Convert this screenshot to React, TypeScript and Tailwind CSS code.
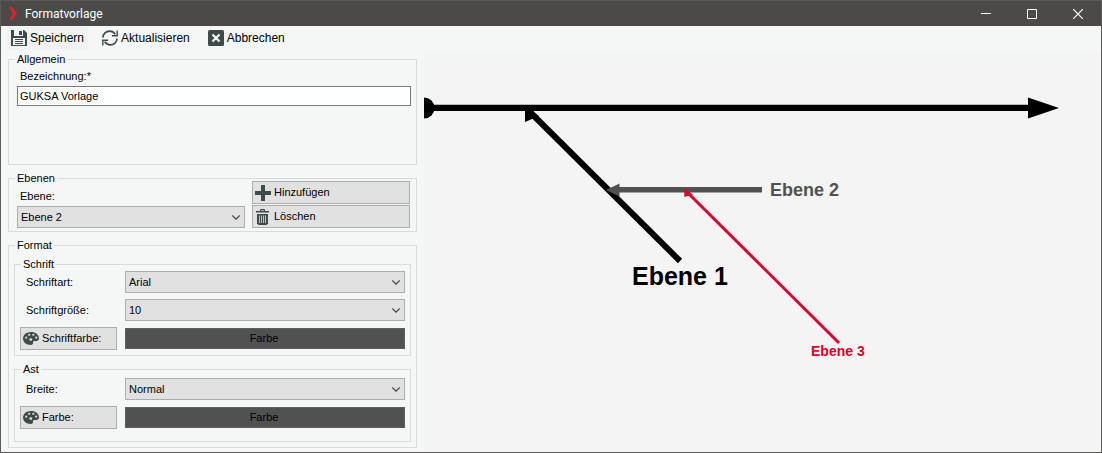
import React, { useState } from 'react';

function SaveIcon() {
  return (
    <svg viewBox="0 0 16 16" className="w-4 h-4 shrink-0" fill="#3f4b4b">
      <path d="M0 0h13l3 3v13H0z" />
      <path d="M3 0h9v6H3z" fill="#f4f5f5" />
      <path d="M8 1h3v4H8z" />
      <path d="M2 8h12v7H2z" fill="#f4f5f5" />
      <path d="M4 9h8v1H4zM4 11h8v1H4zM4 13h8v1H4z" />
    </svg>
  );
}

function RefreshIcon() {
  return (
    <svg viewBox="0 0 16 16" className="w-4 h-4 shrink-0" fill="none" stroke="#3f4b4b" strokeWidth="1.7">
      <path d="M1 7.5C1 3.8 4.2 1.2 7.6 1.2c2.4 0 4.3 1 5.7 3" />
      <path d="M15 8.5c0 3.7-3.2 6.3-6.6 6.3-2.4 0-4.3-1-5.7-3" />
      <path d="M15.2 0.5v5.3H9.9" strokeWidth="1.4" />
      <path d="M0.8 15.5v-5.3h5.3" strokeWidth="1.4" />
    </svg>
  );
}

function CancelIcon() {
  return (
    <svg viewBox="0 0 16 16" className="w-4 h-4 shrink-0">
      <rect width="16" height="16" rx="1.5" fill="#3f4b4b" />
      <path d="M4.5 4.5l7 7M11.5 4.5l-7 7" stroke="#f4f5f5" strokeWidth="2.2" />
    </svg>
  );
}

function PlusIcon() {
  return (
    <svg viewBox="0 0 16 16" className="w-4 h-4 shrink-0" fill="#3f4b4b">
      <path d="M6 0h4v6h6v4h-6v6H6v-6H0V6h6z" />
    </svg>
  );
}

function TrashIcon() {
  return (
    <svg viewBox="0 0 16 16" className="w-4 h-4 shrink-0" fill="#3f4b4b">
      <path d="M1 2h4V0.8L5.8 0h3.4l0.8 0.8V2h4v1.6H1zM6.2 1.2V2h2.6v-0.8z" fillRule="evenodd" />
      <path d="M2 5h11v9.5l-1.5 1.5h-8L2 14.5z" />
      <path d="M4.5 6.5v7.5M6.5 6.5v7.5M8.5 6.5v7.5M10.5 6.5v7.5" stroke="#e1e1e1" strokeWidth="0.8" />
    </svg>
  );
}

function PaletteIcon() {
  return (
    <svg viewBox="0 0 16 13" className="w-4 h-[13px] shrink-0" fill="#3f4b4b">
      <path d="M8 0C3.5 0 0 2.8 0 6.5S3.5 13 7.5 13c2 0 2.7-1 2.5-2.2-.2-1.3.3-2 1.600-1.9 1.6.1 4.4.3 4.4-2.7C16 2.6 12.4 0 8 0z" />
      <g fill="#e1e1e1">
        <circle cx="3.2" cy="5.7" r="1.1" />
        <circle cx="6.2" cy="2.8" r="1.1" />
        <circle cx="10.3" cy="2.8" r="1.1" />
        <circle cx="13.2" cy="5.6" r="1.1" />
        <circle cx="7.8" cy="7.6" r="1.4" />
      </g>
    </svg>
  );
}

function ToolButton({ icon, label, active }: { icon: React.ReactNode; label: string; active?: boolean }) {
  return (
    <button className={`flex items-center gap-[3px] px-1 h-[22px] text-[12px] leading-4 ${active ? 'bg-[#f1f2f2]' : ''}`}>
      {icon}
      <span>{label}</span>
    </button>
  );
}

function PanelButton({ icon, label }: { icon: React.ReactNode; label: string }) {
  return (
    <button className="flex items-center gap-[3px] h-[23px] px-[2px] border border-[#adadad] bg-[#e1e1e1]">
      {icon}
      <span>{label}</span>
    </button>
  );
}

type SelectProps = {
  id: string;
  value: string;
  options: string[];
  onChange: (v: string) => void;
};

function Select({ id, value, options, onChange }: SelectProps) {
  return (
    <div className="relative">
      <select
        id={id}
        value={value}
        onChange={(e) => onChange(e.target.value)}
        className="block w-full h-[22px] pl-[3px] pr-5 appearance-none border border-[#adadad] bg-[#e1e1e1] outline-none"
      >
        {options.map((o) => (
          <option key={o}>{o}</option>
        ))}
      </select>
      <svg viewBox="0 0 8 5" className="absolute right-[5px] top-[9px] w-2 h-[5px] pointer-events-none" fill="none" stroke="#444" strokeWidth="1.2">
        <path d="M0.3 0.5L4 4.2L7.7 0.5" />
      </svg>
    </div>
  );
}

function Group({ title, className = '', children }: { title: string; className?: string; children: React.ReactNode }) {
  return (
    <fieldset className="min-w-0 border border-[#d9dbdb]">
      <legend className="ml-[6px] px-[2px]">{title}</legend>
      <div className={className}>{children}</div>
    </fieldset>
  );
}

function ColorBar() {
  return (
    <button className="h-[21px] pr-[2px] border border-[#5e5e5e] bg-[#515151] text-black text-center">Farbe</button>
  );
}

// fishbone preview of the three levels
function Preview() {
  return (
    <svg viewBox="0 0 670 320" className="w-[670px] h-[320px] shrink-0" role="img" aria-label="Vorschau">
      <path d="M0 44.5A10.5 10.5 0 0 1 0 65.5z" />
      <path d="M0 54.8H606" stroke="#000" strokeWidth="6.2" />
      <path d="M604 44.5L635 55L604 65.5z" />

      <path d="M106 59L256 208" stroke="#000" strokeWidth="6" />
      <path d="M101 54V69L115 63z" />

      <path d="M193 136.8H338" stroke="#515151" strokeWidth="5.5" />
      <path d="M182 137L195.5 130.5V143.5z" fill="#515151" />

      <path d="M263 139L415 290" stroke="#e0002d" strokeWidth="3" />
      <path d="M260.3 135.5V144L269 141.5z" fill="#e0002d" />

      <g className="font-bold">
        <text x="208" y="232" fontSize="25">Ebene 1</text>
        <text x="346" y="143" fontSize="18" fill="#515151">Ebene 2</text>
        <text x="387" y="303" fontSize="14" fill="#e0002d">Ebene 3</text>
      </g>
    </svg>
  );
}

export default function App() {
  const [name, setName] = useState('GUKSA Vorlage');
  const [level, setLevel] = useState('Ebene 2');
  const [font, setFont] = useState('Arial');
  const [size, setSize] = useState('10');
  const [width, setWidth] = useState('Normal');

  return (
    <div className='min-h-screen flex flex-col overflow-hidden border border-[#5a5a59] bg-[#f4f4f4] font-["Liberation_Sans",Arial,sans-serif] text-[11px] leading-[13px] text-black'>
      {/* title bar */}
      <header className="flex items-center h-[25px] bg-[#4b4a48] text-white">
        <svg viewBox="0 0 8 13" className="ml-2 w-2 h-[13px]" fill="#e0202a">
          <path d="M0 0h3.4L8 6.5L3.4 13H0L3.8 6.5z" />
        </svg>
        <h1 className="ml-2 text-[12px] leading-4 font-[Roboto,sans-serif]">Formatvorlage</h1>
        <div className="ml-auto flex">
          <button aria-label="Minimieren" className="w-[46px] h-[25px] flex items-center justify-center">
            <svg viewBox="0 0 10 10" className="w-[10px] h-[10px]" fill="#fff"><path d="M0 4h10v1H0z" /></svg>
          </button>
          <button aria-label="Maximieren" className="w-[46px] h-[25px] flex items-center justify-center">
            <svg viewBox="0 0 10 10" className="w-[10px] h-[10px]" fill="none" stroke="#fff"><path d="M0.5 0.5h9v9h-9z" /></svg>
          </button>
          <button aria-label="Schließen" className="w-[46px] h-[25px] flex items-center justify-center">
            <svg viewBox="0 0 10 10" className="w-[10px] h-[10px]" stroke="#fff" strokeWidth="1.2"><path d="M0 0l10 10M10 0L0 10" /></svg>
          </button>
        </div>
      </header>

      {/* toolbar */}
      <div className="flex gap-[10px] pl-[6px] pt-px pb-1 bg-[#f5f7f7]">
        <ToolButton icon={<SaveIcon />} label="Speichern" active />
        <ToolButton icon={<RefreshIcon />} label="Aktualisieren" />
        <ToolButton icon={<CancelIcon />} label="Abbrechen" />
      </div>

      <main className="flex flex-1">
        <div className="w-[423px] shrink-0 px-[7px] bg-[#f5f7f6] flex flex-col gap-[7px]">
          <Group title="Allgemein" className="pl-2 pr-[5px] pt-1 pb-[58px]">
            <label htmlFor="name" className="block pl-[3px] pb-[3px]">Bezeichnung:*</label>
            <input
              id="name"
              value={name}
              onChange={(e) => setName(e.target.value)}
              className="block w-full h-5 px-[2px] border border-[#7a7a7a] bg-white outline-none"
            />
          </Group>

          <Group title="Ebenen" className="pl-2 pr-[6px] pb-[3px]">
            <div className="-mt-1 flex items-end gap-[7px]">
              <div className="flex-1">
                <label htmlFor="level" className="block pl-[3px] pb-[3px]">Ebene:</label>
                <Select id="level" value={level} options={['Ebene 1', 'Ebene 2', 'Ebene 3']} onChange={setLevel} />
              </div>
              <div className="w-[158px] flex flex-col gap-px">
                <PanelButton icon={<PlusIcon />} label="Hinzufügen" />
                <PanelButton icon={<TrashIcon />} label="Löschen" />
              </div>
            </div>
          </Group>

          <Group title="Format" className="px-[5px] pt-[6px] pb-[5px] flex flex-col gap-[7px]">
            <Group title="Schrift" className="px-[5px] pb-[5px] grid grid-cols-[97px_1fr] gap-x-2 gap-y-[6px] items-center">
              <label htmlFor="font" className="pl-[6px]">Schriftart:</label>
              <Select id="font" value={font} options={['Arial', 'Courier New', 'Times New Roman']} onChange={setFont} />
              <label htmlFor="size" className="pl-[6px]">Schriftgröße:</label>
              <Select id="size" value={size} options={['8', '10', '12', '14']} onChange={setSize} />
              <PanelButton icon={<PaletteIcon />} label="Schriftfarbe:" />
              <ColorBar />
            </Group>

            <Group title="Ast" className="px-[5px] pt-[2px] pb-3 grid grid-cols-[97px_1fr] gap-x-2 gap-y-[6px] items-center">
              <label htmlFor="width" className="pl-[6px]">Breite:</label>
              <Select id="width" value={width} options={['Schmal', 'Normal', 'Breit']} onChange={setWidth} />
              <PanelButton icon={<PaletteIcon />} label="Farbe:" />
              <ColorBar />
            </Group>
          </Group>
        </div>

        <section className="flex-1 min-w-0 overflow-hidden">
          <Preview />
        </section>
      </main>
    </div>
  );
}
